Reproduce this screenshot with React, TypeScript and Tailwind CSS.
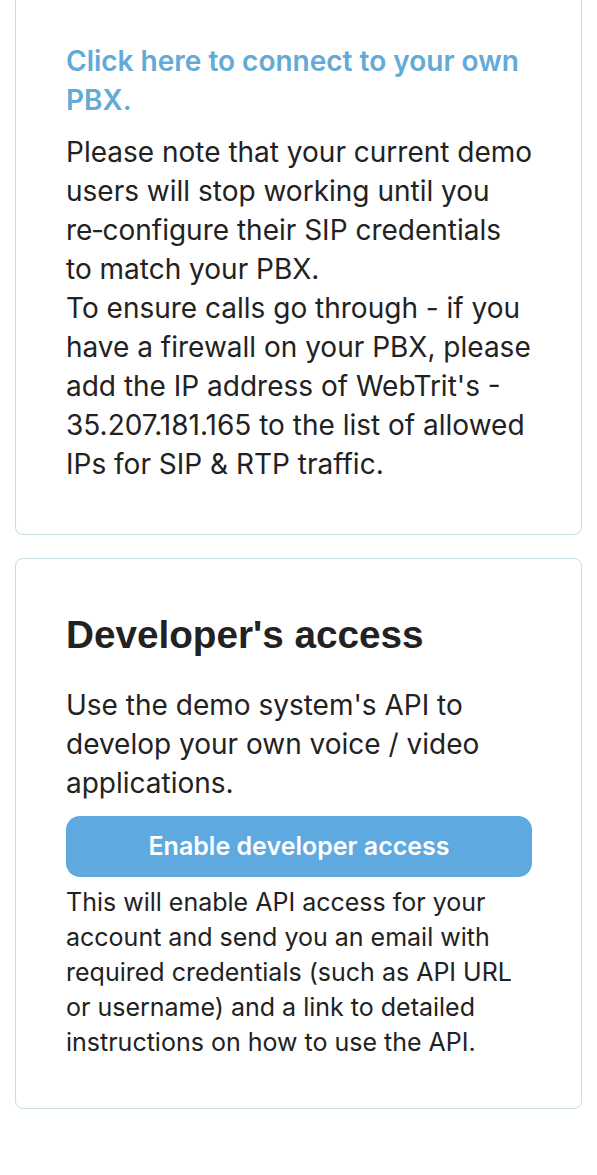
import React from 'react';

export default function App() {
  return (
    <div className="min-h-[1175px] bg-white px-[15px] font-['Inter',sans-serif] text-[#222]">
      {/* PBX card (scrolled, top cut off) */}
      <div className="rounded-b-[8px] border border-t-0 border-[#c9dde6] pl-[50px] pr-[34px] pt-[42px] pb-[50px]">
        <a className="block text-[28px] font-semibold leading-[39px] text-[#64aad6]">
          Click here to connect to your own PBX.
        </a>
        <p className="mt-[13px] text-[28px] leading-[39px]">
          Please note that your current demo users will stop working until you re&#8209;configure their SIP credentials to&nbsp;match your PBX.
        </p>
        <p className="text-[28px] leading-[39px]">
          To ensure calls go through - if you have a firewall on your PBX, please add the IP address of WebTrit's - 35.207.181.165 to the list of allowed IPs for SIP &amp; RTP traffic.
        </p>
      </div>

      {/* Developer access card */}
      <div className="mt-[23px] rounded-[8px] border border-[#c9dde6] pl-[50px] pr-[49px] pt-[54px] pb-[48px]">
        <h2 className="font-['Liberation_Sans',Arial,sans-serif] text-[38.7px] font-bold leading-[44px] text-[#222]">
          Developer's access
        </h2>
        <p className="mt-[29px] text-[28px] leading-[39px]">
          Use the demo system's API to develop your own voice / video applications.
        </p>
        <button className="mt-[13px] h-[61px] w-full rounded-[14px] bg-[#5ea9e0] text-[25px] font-semibold text-white">
          Enable developer access
        </button>
        <p className="mt-[8px] text-[25px] leading-[35px]">
          This will enable API access for your account and send you an email with required credentials (such as API URL or username) and a link to detailed instructions on how to use the API.
        </p>
      </div>
    </div>
  );
}
